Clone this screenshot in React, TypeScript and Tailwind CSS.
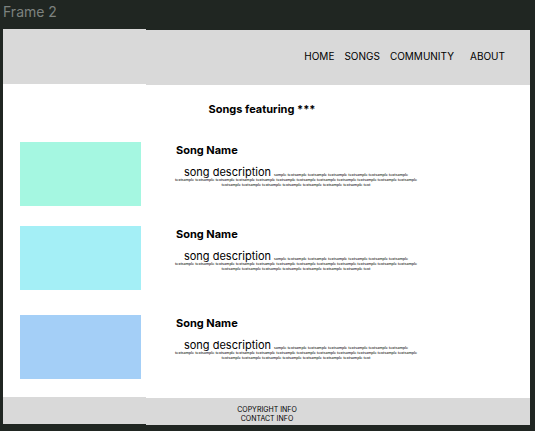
const songs = [
  { id: 1, cover: "bg-[#a5f7e1]", space: "mb-5" },
  { id: 2, cover: "bg-[#a4eff6]", space: "mb-[25px]" },
  { id: 3, cover: "bg-[#a4cff7]", space: "" },
];

const sample = "sample " + "textsample ".repeat(25) + "text";

function Song({ cover, space }: { cover: string; space: string }) {
  return (
    <article className={`flex items-start ${space}`}>
      <div className={`h-16 w-[121px] shrink-0 ${cover}`} />
      <div className="ml-[35px] w-[242px]">
        <h2 className="text-[11px] leading-4 font-bold">Song Name</h2>
        <p className="mt-3 -ml-[2px] text-center font-['Lato',sans-serif] text-[4px] leading-[5px]">
          <span className="font-['Inter',sans-serif] text-[11px] leading-[5px]">song description </span>
          {sample}
        </p>
      </div>
    </article>
  );
}

export default function App() {
  return (
    <div className="min-h-screen bg-[#202622] pt-1 pr-[5px] pb-1 pl-[3px] font-['Inter',sans-serif] text-black">
      <p className="mb-[9px] text-[14px] leading-4 text-[#7d827f]">Frame 2</p>
      <header className="flex">
        <div className="h-14 w-[143px] shrink-0 border-b border-white bg-[#d9d9d9]" />
        <nav className="mt-px flex h-[55px] grow items-center justify-end bg-[#d9d9d9] pr-[25px] pb-1 text-[10px] leading-4">
          <a href="#home" className="mr-[10px]">HOME</a>
          <a href="#songs" className="mr-[10px]">SONGS</a>
          <a href="#community" className="mr-4">COMMUNITY</a>
          <a href="#about">ABOUT</a>
        </nav>
      </header>
      <main className="bg-white px-[17px] pt-4 pb-[18px]">
        <h1 className="mb-[25px] pr-[9px] text-center text-[11px] leading-4 font-bold">Songs featuring ***</h1>
        {songs.map((song) => (
          <Song key={song.id} cover={song.cover} space={song.space} />
        ))}
      </main>
      <footer className="flex text-[7px] leading-[9px]">
        <div className="mb-px h-[27px] w-[143px] shrink-0 bg-[#d9d9d9]" />
        <div className="flex h-7 grow flex-col border-t border-white bg-[#d9d9d9] pt-[7px] pl-[89px]">
          <div className="w-16 text-center whitespace-nowrap">
            <p>COPYRIGHT INFO</p>
            <p>CONTACT INFO</p>
          </div>
        </div>
      </footer>
    </div>
  );
}
